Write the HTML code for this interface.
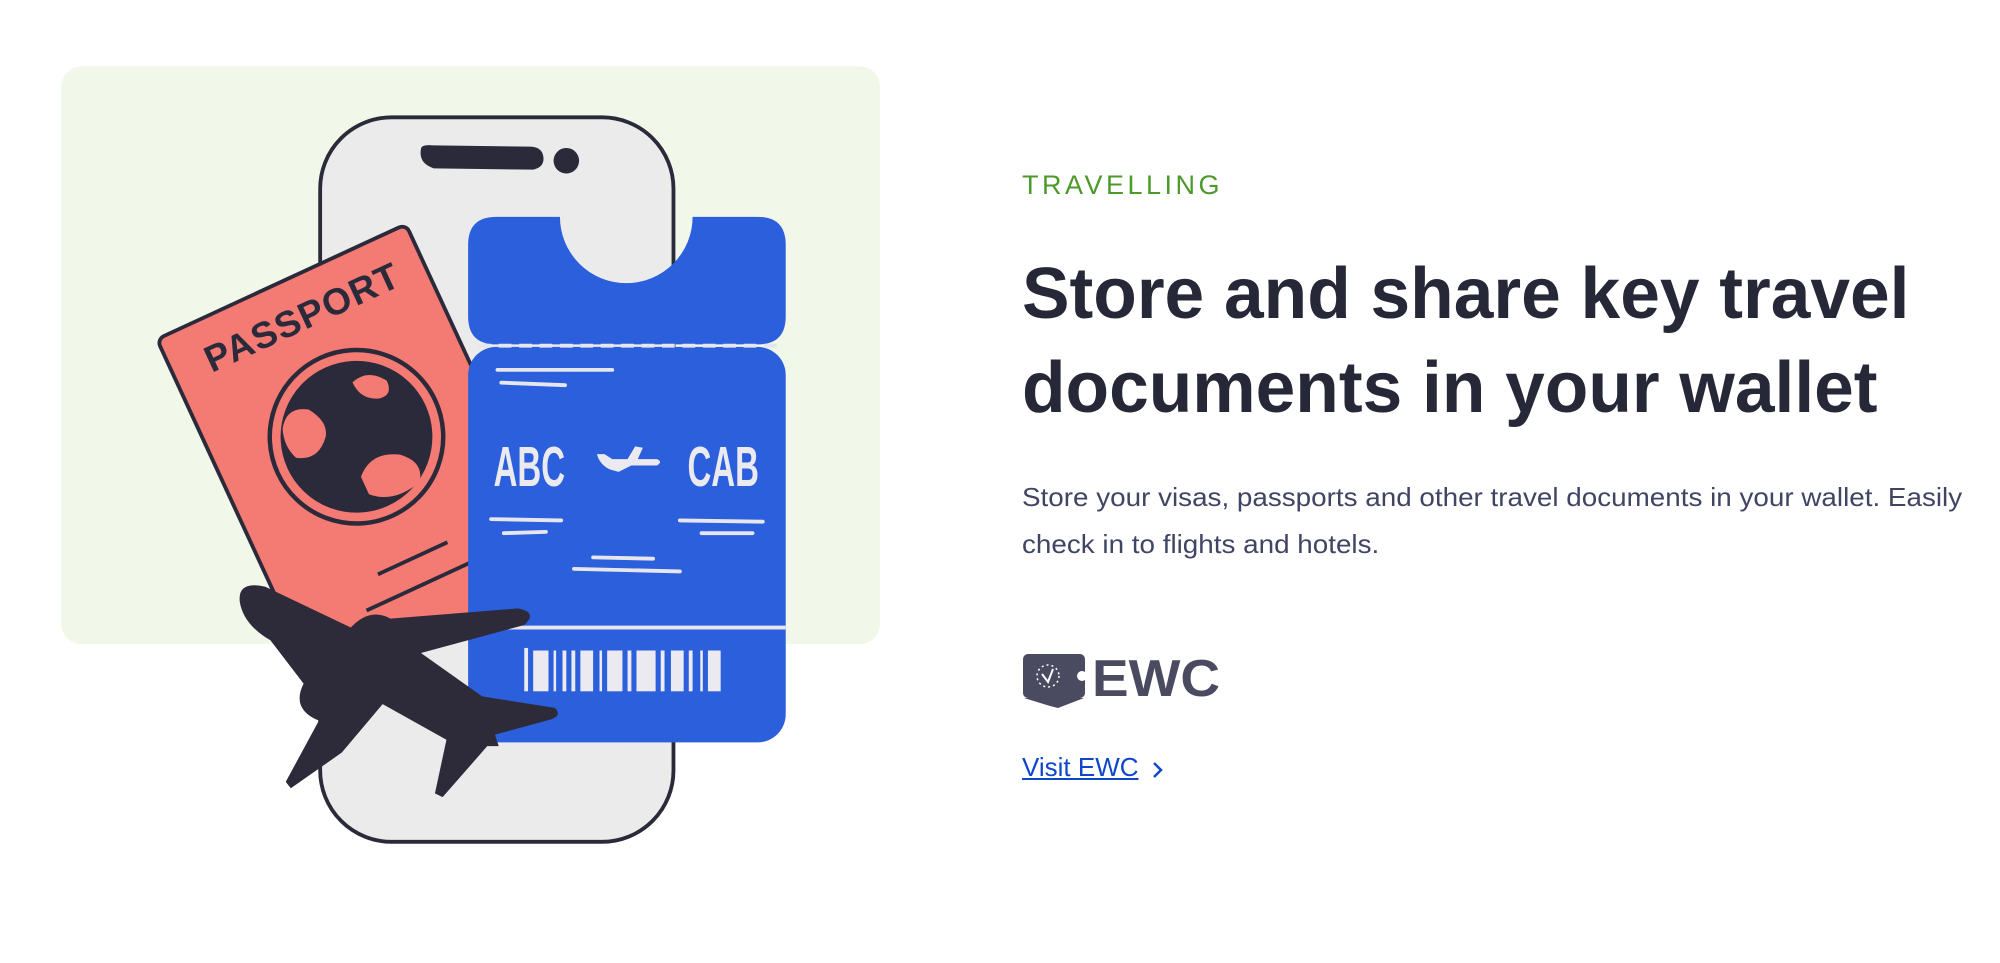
<!DOCTYPE html>
<html><head><meta charset="utf-8"><style>
html,body{margin:0;padding:0;background:#fff;width:2000px;height:963px;overflow:hidden;font-family:"Liberation Sans",sans-serif}
.abs{position:absolute;white-space:nowrap;transform-origin:0 0}
</style></head><body>
<svg class="abs" style="left:0;top:0" width="2000" height="963" viewBox="0 0 1568 755">
<rect x="48" y="52" width="642" height="453" rx="16" fill="#f1f8ea"/>
<rect x="251" y="92" width="277" height="568" rx="56" fill="#ebebeb" stroke="#2b2a3a" stroke-width="3"/>
<path d="M330,117 Q328,128 340,132 L418,133 Q427,131 426,123 Q425,115 415,115 L340,114 Q330,113 330,117Z" fill="#2b2a3a"/>
<circle cx="444" cy="126" r="10" fill="#2b2a3a"/>
<g transform="translate(123,266) rotate(-24.8)">
<rect x="0" y="0" width="215" height="300" rx="6" fill="#f47a74" stroke="#2b2a3a" stroke-width="3"/>
<text x="28" y="42" font-size="29" font-weight="bold" font-family="Liberation Sans" fill="#2b2a3a" letter-spacing="1">PASSPORT</text>
<circle cx="110" cy="135" r="68" fill="none" stroke="#2b2a3a" stroke-width="3.5"/>
<circle cx="110" cy="135" r="58" fill="#2b2a3a" stroke="#2b2a3a" stroke-width="3"/>
<path d="M60,105 Q70,90 85,100 Q95,115 88,125 Q75,140 60,130 Q55,118 60,105Z M100,165 Q115,150 135,162 Q150,175 140,188 Q115,195 100,180Z M125,95 Q140,90 150,105 Q150,118 138,115 Q125,110 125,95Z" fill="#f47a74"/>
<line x1="80" y1="240" x2="140" y2="240" stroke="#2b2a3a" stroke-width="3"/>
<line x1="60" y1="262" x2="150" y2="262" stroke="#2b2a3a" stroke-width="3"/>
</g>
<path d="M389,170 L439,170 A52,52 0 0 0 543,170 L594,170 Q616,170 616,192 L616,248 Q616,270 594,270 L389,270 Q367,270 367,248 L367,192 Q367,170 389,170Z" fill="#2b5fdb"/>
<rect x="367" y="272" width="249" height="310" rx="22" fill="#2b5fdb"/>
<line x1="375" y1="271" x2="610" y2="271" stroke="#e6e6ee" stroke-width="3" stroke-dasharray="10,6"/>
<line x1="367" y1="492" x2="616" y2="492" stroke="#e6e6ee" stroke-width="3"/>
<g stroke="#e6e6ee" stroke-width="3" stroke-linecap="round">
<line x1="390" y1="290" x2="480" y2="290"/><line x1="393" y1="300" x2="443" y2="302"/>
<line x1="385" y1="407" x2="440" y2="408"/><line x1="395" y1="418" x2="428" y2="417"/>
<line x1="533" y1="408" x2="598" y2="409"/><line x1="550" y1="418" x2="590" y2="418"/>
<line x1="465" y1="437" x2="512" y2="438"/><line x1="450" y1="446" x2="533" y2="448"/>
</g>
<text x="387" y="381" font-size="44" font-weight="bold" font-family="Liberation Sans" fill="#eaeaf0" textLength="56" lengthAdjust="spacingAndGlyphs">ABC</text>
<text x="539" y="381" font-size="44" font-weight="bold" font-family="Liberation Sans" fill="#eaeaf0" textLength="56" lengthAdjust="spacingAndGlyphs">CAB</text>
<path d="M468,356 L474,356 L480,360 L492,360 L498,350 L504,351 L500,360 L515,360 Q520,362 515,365 L495,365 L485,370 L478,368 Q470,364 468,356Z" fill="#eaeaf0"/>
<g fill="#eaeaf0">
<rect x="411" y="508" width="3" height="34"/><rect x="418" y="510" width="12" height="32"/><rect x="434" y="510" width="2" height="32"/><rect x="441" y="510" width="3" height="32"/><rect x="448" y="510" width="3" height="32"/><rect x="455" y="510" width="10" height="32"/><rect x="470" y="510" width="2" height="32"/><rect x="476" y="510" width="12" height="32"/><rect x="492" y="510" width="3" height="32"/><rect x="499" y="510" width="15" height="32"/><rect x="518" y="510" width="3" height="32"/><rect x="526" y="510" width="10" height="32"/><rect x="540" y="510" width="3" height="32"/><rect x="549" y="510" width="2" height="32"/><rect x="555" y="510" width="10" height="32"/>
</g>
<path d="M188,472 Q186,455 208,460 L275,492 Q290,476 306,485 L406,477 Q422,480 411,490 L330,512 L378,546 L435,555 Q441,561 432,564 L388,576 L391,585 L382,585 L347,625 L341,622 L350,580 L300,552 L268,590 L228,618 L224,613 L250,565 Q228,556 238,536 L212,502 Q191,490 188,472Z" fill="#2d2a3a"/>
</svg>
<div class="abs" style="left:1022px;top:170px;font-size:27px;letter-spacing:3.5px;color:#4c9a2a">TRAVELLING</div>
<div class="abs" style="left:1022px;top:247px;font-size:72px;font-weight:bold;color:#262838;line-height:94px;transform:scaleX(0.99)">Store and share key travel<br>documents in your wallet</div>
<div class="abs" style="left:1022px;top:474px;font-size:26px;color:#404563;line-height:47px;transform:scaleX(1.07)">Store your visas, passports and other travel documents in your wallet. Easily<br>check in to flights and hotels.</div>
<svg class="abs" style="left:1022px;top:650px" width="200" height="62" viewBox="0 0 200 62">
<rect x="1" y="4" width="62" height="44" rx="5" fill="#4a4b60"/>
<path d="M2,48 L62,48 L36,58 L28,56Z" fill="#4a4b60"/>
<circle cx="60" cy="26" r="5" fill="#fff"/>
<circle cx="26" cy="26" r="11" fill="none" stroke="#fff" stroke-width="1.5" stroke-dasharray="2,3"/>
<path d="M20,24 L26,32 L31,19" fill="none" stroke="#fff" stroke-width="2"/>
<text x="70" y="46" font-size="52" font-weight="bold" font-family="Liberation Sans" fill="#4a4b60" textLength="128" lengthAdjust="spacingAndGlyphs">EWC</text>
</svg>
<div class="abs" style="left:1022px;top:752px;font-size:26px;color:#0e47cb;text-decoration:underline">Visit EWC</div>
<svg class="abs" style="left:1150px;top:760px" width="16" height="20" viewBox="0 0 16 20"><path d="M4,3 L11,10 L4,17" fill="none" stroke="#0e47cb" stroke-width="2.5"/></svg>
</body></html>
